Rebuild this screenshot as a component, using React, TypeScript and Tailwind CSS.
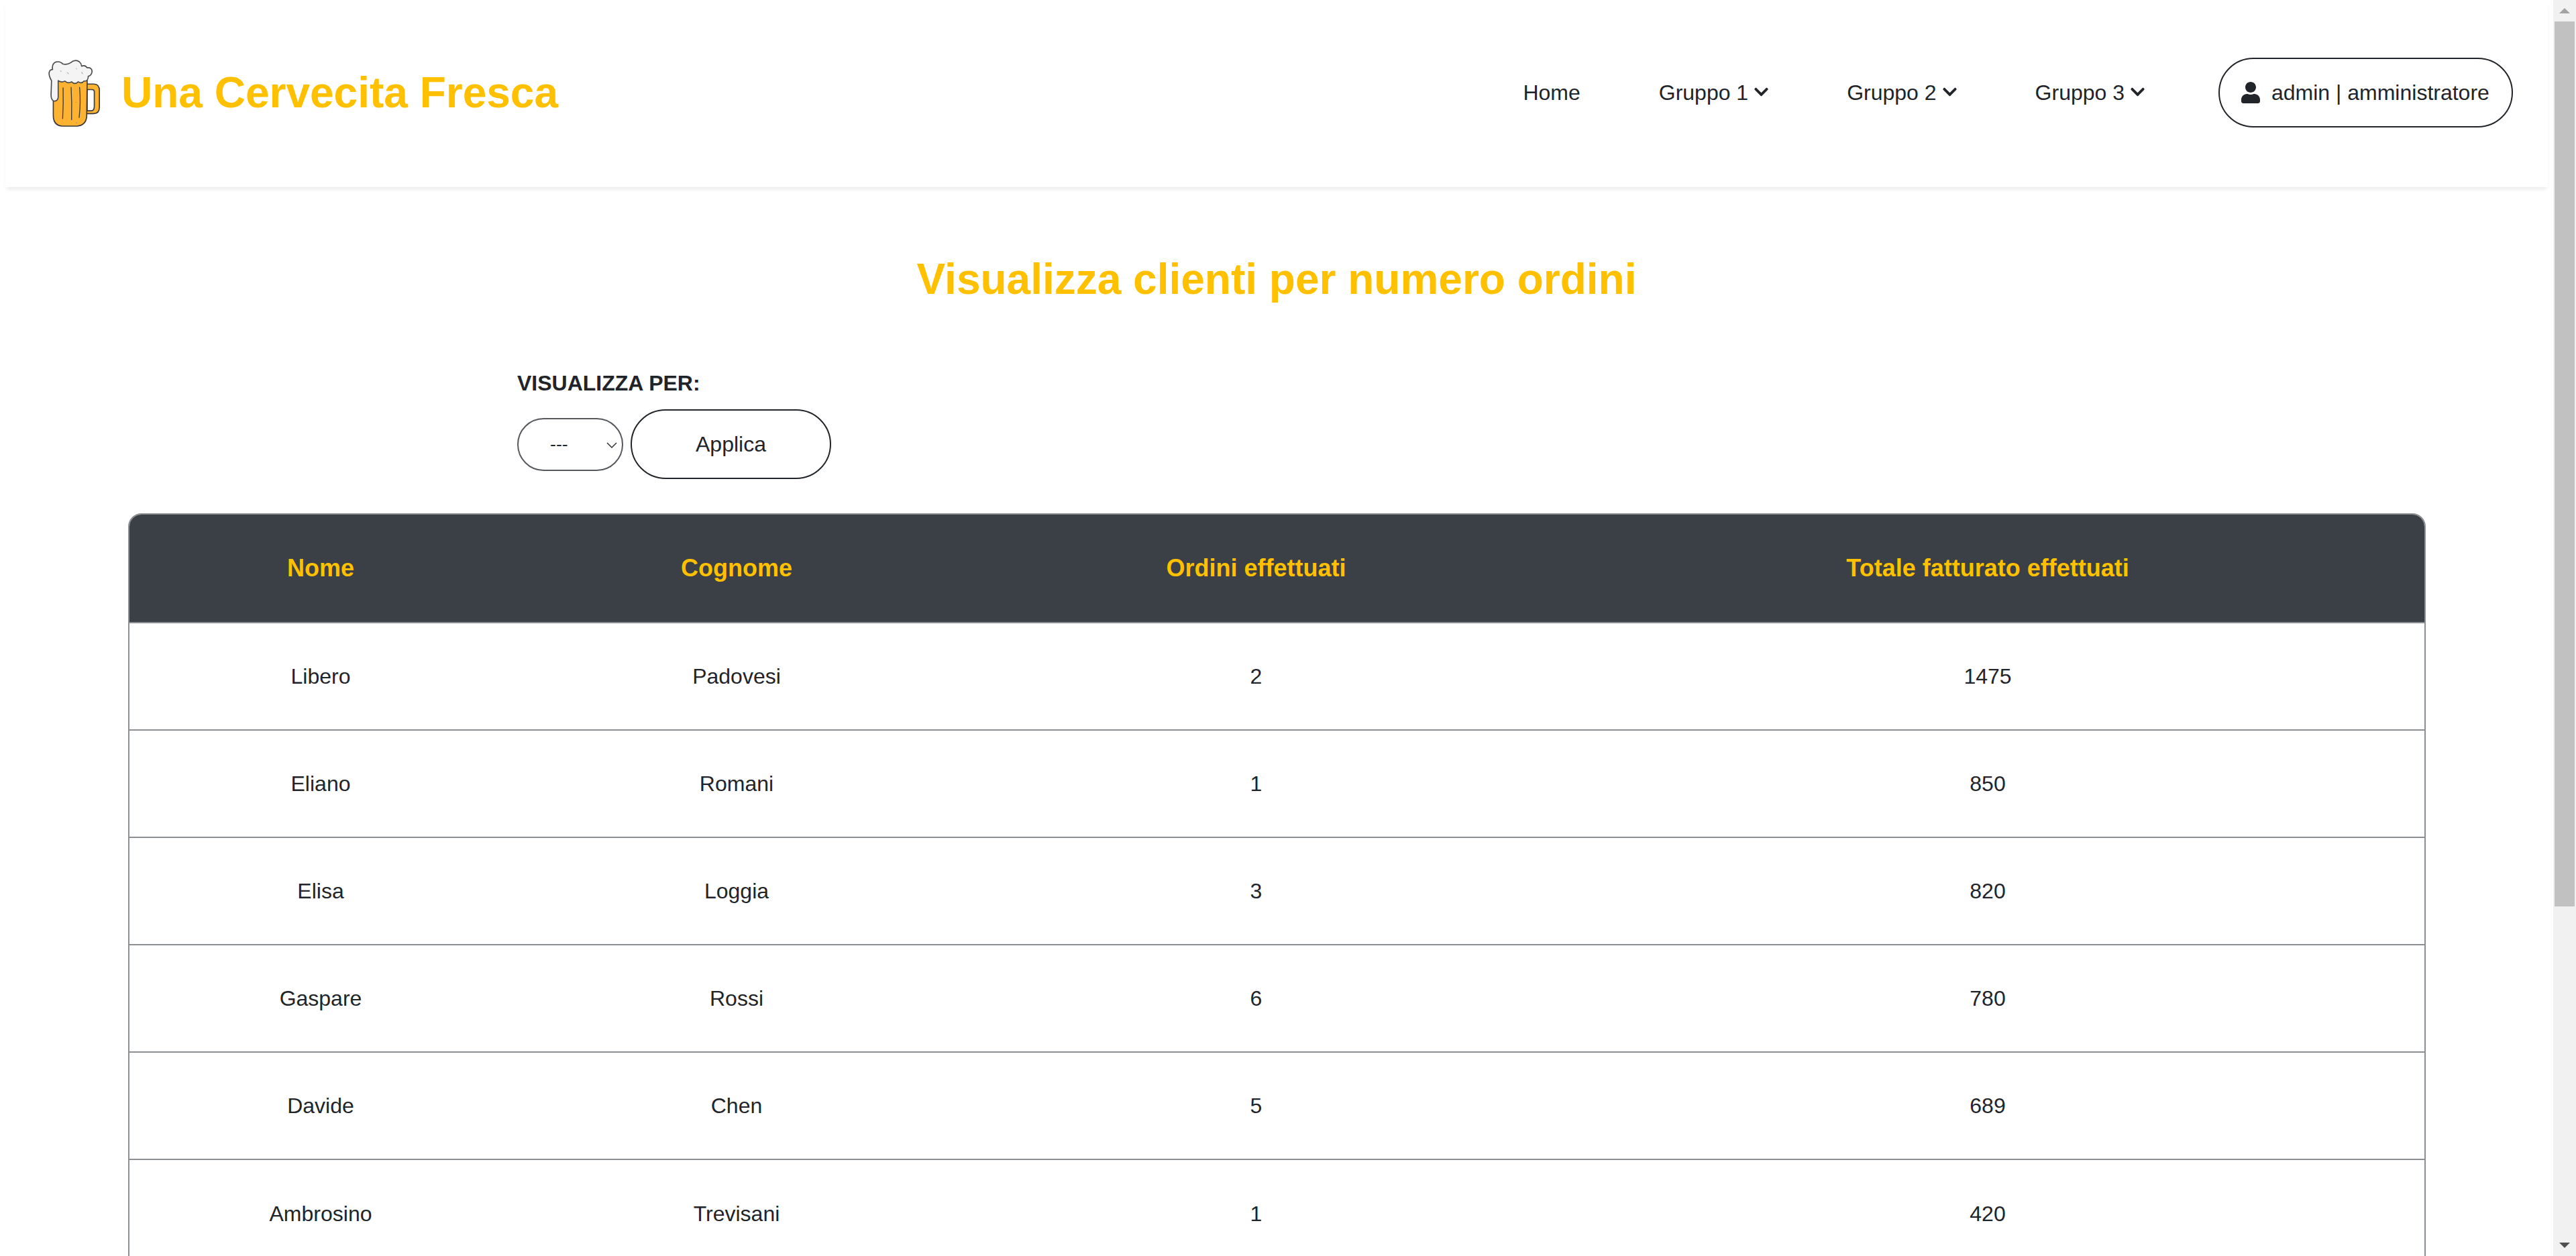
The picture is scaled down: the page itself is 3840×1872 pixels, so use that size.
import { FaUser, FaChevronDown } from "react-icons/fa";

const rows = [
  ["Libero", "Padovesi", "2", "1475"],
  ["Eliano", "Romani", "1", "850"],
  ["Elisa", "Loggia", "3", "820"],
  ["Gaspare", "Rossi", "6", "780"],
  ["Davide", "Chen", "5", "689"],
  ["Ambrosino", "Trevisani", "1", "420"],
];

function Mug() {
  return (
    <svg viewBox="60 50 240 310" className="w-[80px] h-[103px] shrink-0">
      <path fillRule="evenodd" d="M236 165 H270 Q295 165 295 195 V270 Q295 298 268 298 H236 Z M240 190 V285 H258 Q272 285 272 265 V200 Q272 190 262 190 Z" fill="#fdb331" stroke="#3a3a3a" strokeWidth="5" />
      <path d="M88 150 L88 310 Q90 352 130 354 H195 Q235 350 238 310 L240 150 Z" fill="#fdb331" stroke="#3a3a3a" strokeWidth="5" />
      <path d="M132 182 Q134 250 130 320 M168 180 Q172 250 170 325 M206 180 Q212 250 204 315" stroke="#3a3a3a" strokeWidth="4" fill="none" strokeLinecap="round" />
      <path d="M92 242 Q78 238 78 215 L80 150 Q66 125 70 112 Q72 100 85 100 Q80 75 100 66 Q120 62 130 75 Q150 80 165 70 Q185 52 205 65 Q215 75 215 85 Q230 78 240 92 Q262 90 262 110 Q258 130 245 130 Q245 155 225 152 Q215 165 200 155 Q185 170 170 155 Q155 165 140 152 Q125 160 110 150 L110 225 Q108 242 92 242 Z" fill="#f4f4f4" stroke="#4a4a4a" strokeWidth="5" strokeLinejoin="round" />
      <path d="M120 105 L124 110 M150 112 L157 120 M215 112 L220 120 M190 95 L194 98 M190 245 L190 248 M190 340 L195 338" stroke="#8a8a8a" strokeWidth="3" fill="none" />
    </svg>
  );
}

function NavItem({ label }: { label: string }) {
  return (
    <a className="flex items-center gap-[9px] text-[32px] text-[#212529]">
      {label}
      <FaChevronDown className="w-[21px] h-[24px] mt-[-2px]" />
    </a>
  );
}

export default function App() {
  return (
    <div className="flex h-[1872px] overflow-hidden bg-white font-['Liberation_Sans',Arial,sans-serif] text-[#212529]">
      <main className="flex-1 min-w-0">
        <header className="mx-[8px] h-[279px] pb-[3px] flex items-center justify-between pl-[62px] pr-[52px] bg-white shadow-[0_5px_6px_-2px_rgba(0,0,0,0.09)]">
          <div className="flex items-center gap-[31px]">
            <Mug />
            <span className="text-[64px] font-bold text-[#ffc000] leading-none">Una Cervecita Fresca</span>
          </div>
          <nav className="flex items-center">
            <a className="text-[32px] mr-[117px]">Home</a>
            <div className="mr-[117px]"><NavItem label="Gruppo 1" /></div>
            <div className="mr-[117px]"><NavItem label="Gruppo 2" /></div>
            <div className="mr-[110px]"><NavItem label="Gruppo 3" /></div>
            <div className="w-[439px] h-[104px] flex items-center gap-[17px] pl-[32px] border-2 border-[#212529] rounded-[52px] text-[32px]">
              <FaUser className="w-[28px] h-[32px]" />
              admin | amministratore
            </div>
          </nav>
        </header>

        <h1 className="mt-[99px] text-center text-[64px] font-bold leading-[77px] text-[#ffc000]">Visualizza clienti per numero ordini</h1>

        <div className="ml-[771px] mt-[92px]">
          <div className="text-[32px] font-bold leading-[48px]">VISUALIZZA PER:</div>
          <div className="mt-[15px] flex items-center gap-[11px]">
            <div className="relative w-[158px] h-[79px]">
              <select className="w-full h-full appearance-none border-2 border-[#55595e] rounded-[40px] pl-[47px] text-[26.67px] bg-white">
                <option>---</option>
              </select>
              <svg viewBox="0 0 16 9" className="absolute right-[9px] top-[36px] w-[16px] h-[9px]" fill="none" stroke="#333" strokeWidth="1.5">
                <path d="M1 1 L8 8 L15 1" />
              </svg>
            </div>
            <button className="w-[299px] h-[104px] border-2 border-[#212529] rounded-[52px] text-[32px]">Applica</button>
          </div>
        </div>

        <div className="mt-[51px] ml-[191px] mr-[190px] border-2 border-[#8a8f94] rounded-[20px] overflow-hidden">
          <table className="w-full table-fixed border-collapse text-center text-[32px]">
            <thead>
              <tr className="h-[161px] bg-[#3b3f46] text-[36px] font-bold text-[#ffc000]">
                <th className="w-[570px] font-bold">Nome</th>
                <th className="w-[670px] font-bold">Cognome</th>
                <th className="w-[879px] font-bold">Ordini effettuati</th>
                <th className="font-bold">Totale fatturato effettuati</th>
              </tr>
            </thead>
            <tbody>
              {rows.map((r) => (
                <tr key={r[0]} className="h-[160px] border-t-2 border-[#8a8f94]">
                  {r.map((c, i) => (
                    <td key={i}>{c}</td>
                  ))}
                </tr>
              ))}
            </tbody>
          </table>
        </div>
      </main>

      <aside className="w-[34px] h-full shrink-0 bg-[#f1f1f1] flex flex-col items-center">
        <div className="h-[32px] w-full flex items-center justify-center">
          <svg viewBox="0 0 16 8" className="w-[16px] h-[8px]"><path d="M0 8 L8 0 L16 8 Z" fill="#a3a3a3" /></svg>
        </div>
        <div className="w-[30px] h-[1319px] bg-[#c1c1c1]" />
        <div className="flex-1" />
        <div className="h-[32px] w-full flex items-center justify-center">
          <svg viewBox="0 0 16 8" className="w-[16px] h-[8px]"><path d="M0 0 L16 0 L8 8 Z" fill="#505050" /></svg>
        </div>
      </aside>
    </div>
  );
}
